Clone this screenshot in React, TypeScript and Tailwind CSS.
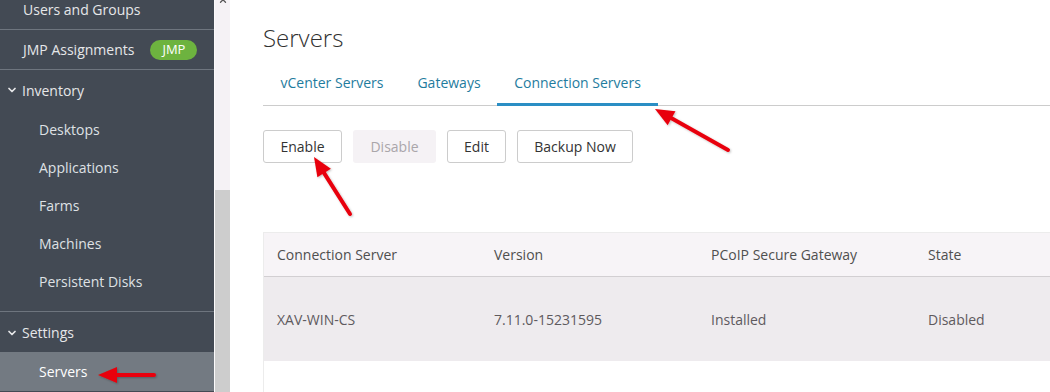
import { ChevronDown, ChevronUp } from 'lucide-react';

const inventory = ['Desktops', 'Applications', 'Farms', 'Machines', 'Persistent Disks'];
const tabs = [
  { label: 'vCenter Servers', w: 'w-[138px]', active: false },
  { label: 'Gateways', w: 'w-[96px]', active: false },
  { label: 'Connection Servers', w: 'w-[161px]', active: true },
];
const buttons = [
  { label: 'Enable', disabled: false, w: 'w-[79px]' },
  { label: 'Disable', disabled: true, w: 'w-[83px]' },
  { label: 'Edit', disabled: false, w: 'w-[59px]' },
  { label: 'Backup Now', disabled: false, w: 'w-[116px]' },
];
const columns = ['Connection Server', 'Version', 'PCoIP Secure Gateway', 'State'];
const row = ['XAV-WIN-CS', '7.11.0-15231595', 'Installed', 'Disabled'];

const Arrow = ({ x1, y1, x2, y2 }: { x1: number; y1: number; x2: number; y2: number }) => {
  // tail (x1,y1) -> head (x2,y2)
  const a = Math.atan2(y2 - y1, x2 - x1);
  const len = 19;
  const half = 8;
  const bx = x2 - Math.cos(a) * len;
  const by = y2 - Math.sin(a) * len;
  const px = -Math.sin(a) * half;
  const py = Math.cos(a) * half;
  return (
    <g>
      <line x1={x1} y1={y1} x2={bx} y2={by} stroke="#e8000b" strokeWidth={4} strokeLinecap="round" />
      <polygon points={`${x2},${y2} ${bx + px},${by + py} ${bx - px},${by - py}`} fill="#e8000b" />
    </g>
  );
};

const App = () => {
  return (
    <div
      className="relative flex h-[392px] w-[1050px] overflow-hidden bg-white"
      style={{ fontFamily: '"Open Sans", "Noto Sans", sans-serif' }}
    >
      {/* ── SIDEBAR ─────────────────────────────────────────── */}
      <nav className="w-[214px] shrink-0 bg-[#434a54] text-[14px] text-[#e6e7e9]">
        <div className="-mt-[10px]">
          <div className="flex h-[40px] items-center border-b border-[#6e757e] pl-[23px]">Users and Groups</div>
          <div className="flex h-[40px] items-center border-b border-[#6e757e] pl-[23px]">
            JMP Assignments
            <span className="ml-[16px] flex h-[20px] w-[47px] items-center justify-center rounded-full bg-[#6db33f] text-[13px] text-white">
              JMP
            </span>
          </div>
          <div className="border-b border-[#6e757e] pb-[11px]">
            <div className="flex h-[40px] items-center gap-[4px] pl-[6px]">
              <ChevronDown size={12} strokeWidth={3.5} />
              Inventory
            </div>
            {inventory.map(item => (
              <div key={item} className="flex h-[38px] items-center pl-[39px] pt-[1px] text-[#dfe1e4]">{item}</div>
            ))}
          </div>
          <div className="flex h-[40px] items-center gap-[4px] pl-[6px] pt-[1px]">
            <ChevronDown size={12} strokeWidth={3.5} />
            Settings
          </div>
          <div className="flex h-[39px] items-center bg-[#737a82] pl-[39px] font-medium text-white">Servers</div>
        </div>
      </nav>

      {/* ── SCROLLBAR ───────────────────────────────────────── */}
      <div className="flex w-[16px] shrink-0 flex-col border-l border-[#fbfafb] bg-[#f5f2f5]">
        <div className="flex h-[190px] justify-center">
          <ChevronUp size={10} strokeWidth={3} className="-mt-[4px] text-[#555]" />
        </div>
        <div className="flex-1 bg-[#cdcdcd]" />
      </div>

      {/* ── MAIN ────────────────────────────────────────────── */}
      <main className="flex-1 pl-[33px] pt-[22px]">
        <h1 className="text-[24px] font-light leading-[32px] text-[#313131]">Servers</h1>

        <div className="mt-[8px] flex h-[44px] border-b border-[#cccccc] text-[14px] text-[#1f7c9e]">
          {tabs.map(t => (
            <div
              key={t.label}
              className={`-mb-px flex items-center justify-center border-b-[3px] ${t.w} ${
                t.active ? 'border-[#2a8ec4]' : 'border-transparent'
              }`}
            >
              {t.label}
            </div>
          ))}
        </div>

        <div className="mt-[24px] flex gap-[11px]">
          {buttons.map(b => (
            <div
              key={b.label}
              className={`flex h-[33px] items-center justify-center rounded-[3px] text-[14px] ${b.w} ${
                b.disabled ? 'bg-[#f5f2f5] text-[#aaa6aa]' : 'border border-[#cccccc] bg-white text-[#333333]'
              }`}
            >
              {b.label}
            </div>
          ))}
        </div>

        <div className="mt-[69px] border-l border-t border-[#ececec] text-[14px] text-[#565656]">
          <div className="grid h-[44px] grid-cols-[217px_217px_217px_217px] items-center border-b border-[#d2cfd2] bg-[#f7f4f7]">
            {columns.map(c => (
              <div key={c} className="pl-[13px] text-[#4f4f4f]">{c}</div>
            ))}
          </div>
          <div className="grid h-[84px] grid-cols-[217px_217px_217px_217px] items-center bg-[#eeebee]">
            {row.map(c => (
              <div key={c} className="pl-[13px] text-[#5e5a5e]">{c}</div>
            ))}
          </div>
          <div className="h-[40px]" />
        </div>
      </main>

      {/* ── ANNOTATION ARROWS ───────────────────────────────── */}
      <svg className="pointer-events-none absolute left-0 top-0" width={1050} height={392}>
        <defs>
          <filter id="sh" x="-20%" y="-20%" width="140%" height="140%">
            <feDropShadow dx="1" dy="1" stdDeviation="1" floodColor="#000" floodOpacity="0.25" />
          </filter>
        </defs>
        <g filter="url(#sh)">
          <Arrow x1={728} y1={150} x2={655} y2={109} />
          <Arrow x1={350} y1={214} x2={314} y2={157} />
          <Arrow x1={154} y1={375} x2={98} y2={375} />
        </g>
      </svg>
    </div>
  );
};

export default App;
